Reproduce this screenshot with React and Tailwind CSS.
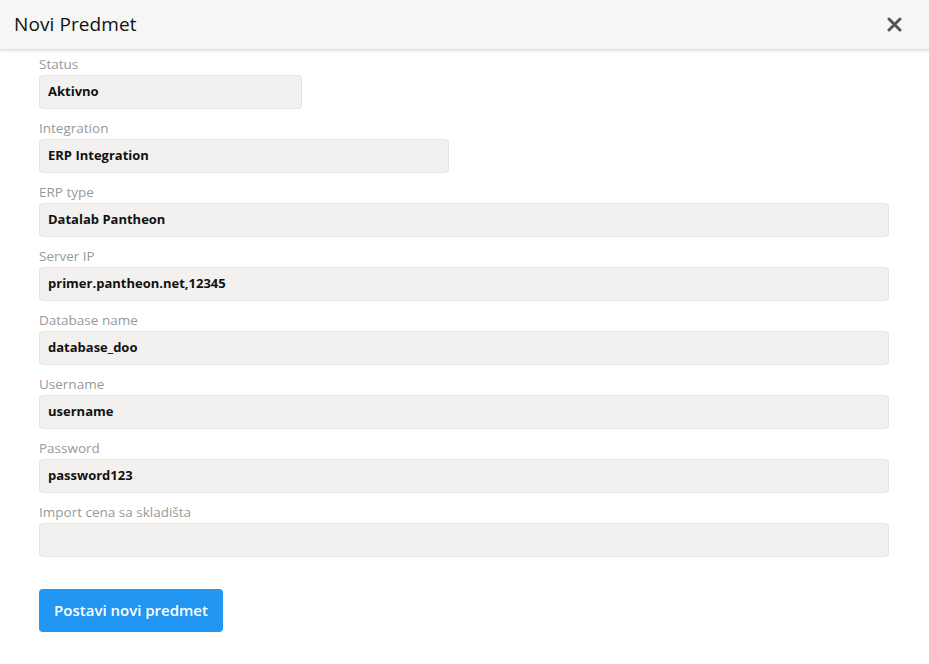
import React from "react";

const fields = [
  { label: "Status", value: "Aktivno", w: "w-[263px]" },
  { label: "Integration", value: "ERP Integration", w: "w-[410px]" },
  { label: "ERP type", value: "Datalab Pantheon", w: "w-[850px]" },
  { label: "Server IP", value: "primer.pantheon.net,12345", w: "w-[850px]" },
  { label: "Database name", value: "database_doo", w: "w-[850px]" },
  { label: "Username", value: "username", w: "w-[850px]" },
  { label: "Password", value: "password123", w: "w-[850px]" },
  { label: "Import cena sa skladišta", value: "", w: "w-[850px]" },
];

export default function App() {
  return (
    <div className="w-[929px] h-[664px] bg-white overflow-hidden" style={{ fontFamily: '"Open Sans", "Noto Sans", sans-serif' }}>
      <div className="h-[50px] bg-[#f6f6f6] border-b border-[#e2e2e2] shadow-[0_1px_3px_rgba(0,0,0,0.12)] flex items-center justify-between pl-[14px] pr-[27px]">
        <div className="text-[19px] text-[#111] tracking-[0.1px]">Novi Predmet</div>
        <svg width="15" height="15" viewBox="0 0 15 15">
          <path d="M2 2 L13 13 M13 2 L2 13" stroke="#555" strokeWidth="3" strokeLinecap="round" />
        </svg>
      </div>
      <div className="pl-[39px] pt-[6px] flex flex-col">
        {fields.map((f) => (
          <div key={f.label} className="flex flex-col h-[64px]">
            <div className="text-[13.5px] leading-[17px] text-[#999] h-[19px]">{f.label}</div>
            <div className={`${f.w} h-[34px] bg-[#f2f1f0] border border-[#e4e3e2] rounded-[4px] flex items-center px-[8px] text-[13px] font-bold text-[#111]`}>
              {f.value}
            </div>
          </div>
        ))}
        <button className="mt-[21px] w-[184px] h-[43px] bg-[#2196f3] rounded-[4px] text-white text-[15px] font-semibold flex items-center justify-center">
          Postavi novi predmet
        </button>
      </div>
    </div>
  );
}
